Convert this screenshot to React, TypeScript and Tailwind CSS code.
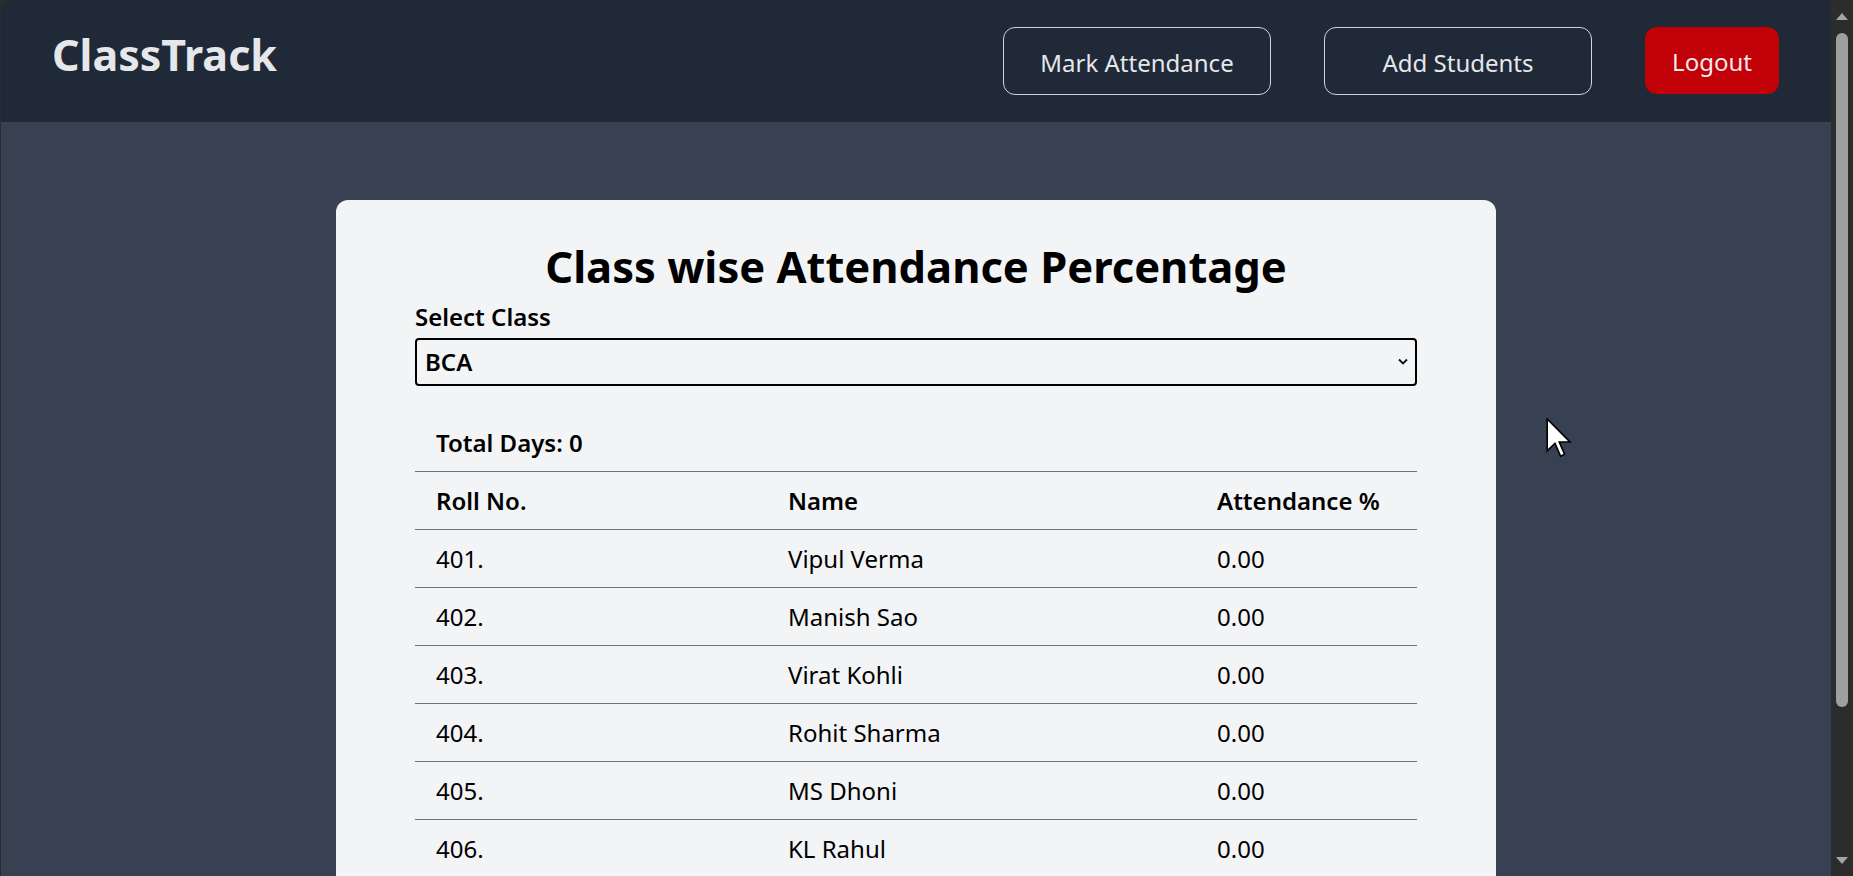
import React from "react";

const rows = [
  { roll: "401.", name: "Vipul Verma", pct: "0.00" },
  { roll: "402.", name: "Manish Sao", pct: "0.00" },
  { roll: "403.", name: "Virat Kohli", pct: "0.00" },
  { roll: "404.", name: "Rohit Sharma", pct: "0.00" },
  { roll: "405.", name: "MS Dhoni", pct: "0.00" },
  { roll: "406.", name: "KL Rahul", pct: "0.00" },
];

export default function App() {
  return (
    <div className="relative flex h-[876px] w-full overflow-hidden bg-[#2b2b2b] font-['Noto_Sans',sans-serif]">
      <div className="mt-px ml-px flex min-w-0 flex-1 flex-col overflow-hidden rounded-tl-[8px] bg-[#374151]">
        {/* Navbar */}
        <nav className="flex h-[121px] shrink-0 items-start justify-between bg-[#1f2937] pl-[51px] pr-[52px]">
          <div className="mt-[32px] text-[43px] font-bold leading-none text-[#e5e7eb]">ClassTrack</div>
          <div className="mt-[26px] flex gap-[53px]">
            <button className="flex h-[68px] w-[268px] items-center justify-center rounded-[12px] border border-[#d1d5db] pt-[3px] text-[24px] text-[#e5e7eb]">
              Mark Attendance
            </button>
            <button className="flex h-[68px] w-[268px] items-center justify-center rounded-[12px] border border-[#d1d5db] pt-[3px] text-[24px] text-[#e5e7eb]">
              Add Students
            </button>
            <button className="flex h-[67px] w-[134px] items-center justify-center rounded-[12px] bg-[#c10008] pt-[3px] text-[24px] text-[#f3e8ee]">
              Logout
            </button>
          </div>
        </nav>

        {/* Card */}
        <div className="mx-auto mt-[78px] w-[1160px] shrink-0 rounded-[12px] bg-[#f3f4f6] px-[79px] pt-[45px] pb-[60px] text-black">
          <h1 className="text-center text-[43.5px] font-bold leading-[43px]">Class wise Attendance Percentage</h1>
          <div className="mt-[13px] text-[24px] font-semibold leading-[32px]">Select Class</div>
          <div className="relative mt-[5px]">
            <select className="h-[48px] w-full appearance-none rounded-[4px] border-2 border-black bg-transparent pl-[8px] text-[24px] font-semibold leading-none text-black outline-none">
              <option>BCA</option>
            </select>
            <svg className="pointer-events-none absolute right-[9px] top-[20px]" width="10" height="7" viewBox="0 0 10 7" fill="none">
              <path d="M1 1.5 L5 5.5 L9 1.5" stroke="#111" strokeWidth="1.8" />
            </svg>
          </div>

          <div className="mt-[28px]">
            <div className="flex h-[57px] items-center px-[21px] text-[24px] font-semibold">Total Days: 0</div>
            <div className="grid h-[58px] grid-cols-[352px_429px_1fr] items-center border-t border-[#6b7280] text-[24px] font-semibold">
              <div className="px-[21px]">Roll No.</div>
              <div className="px-[21px]">Name</div>
              <div className="px-[21px]">Attendance %</div>
            </div>
            {rows.map((r) => (
              <div key={r.roll} className="grid h-[58px] grid-cols-[352px_429px_1fr] items-center border-t border-[#6b7280] text-[24px]">
                <div className="px-[21px]">{r.roll}</div>
                <div className="px-[21px]">{r.name}</div>
                <div className="px-[21px]">{r.pct}</div>
              </div>
            ))}
          </div>
        </div>
      </div>

      {/* Scrollbar */}
      <div className="relative flex w-[22px] shrink-0 flex-col items-center bg-[#2c2c2c]">
        <svg className="mt-[13px]" width="12" height="7" viewBox="0 0 12 7">
          <path d="M0 7 L6 0 L12 7 Z" fill="#a3a3a3" />
        </svg>
        <div className="mt-[13px] h-[674px] w-[12px] rounded-full bg-[#9f9f9f]" />
        <svg className="absolute bottom-[12px]" width="12" height="7" viewBox="0 0 12 7">
          <path d="M0 0 L12 0 L6 7 Z" fill="#a3a3a3" />
        </svg>
      </div>

      {/* Mouse cursor */}
      <svg className="pointer-events-none absolute left-[1546px] top-[418px]" width="27" height="40" viewBox="0 0 13 19.5">
        <path d="M0.5 0.5 L0.5 16 L4.3 12.4 L7 18.6 L9 17.7 L6.4 11.7 L11.6 11.7 Z" fill="#fff" stroke="#000" strokeWidth="0.8" strokeLinejoin="miter" />
      </svg>
    </div>
  );
}
